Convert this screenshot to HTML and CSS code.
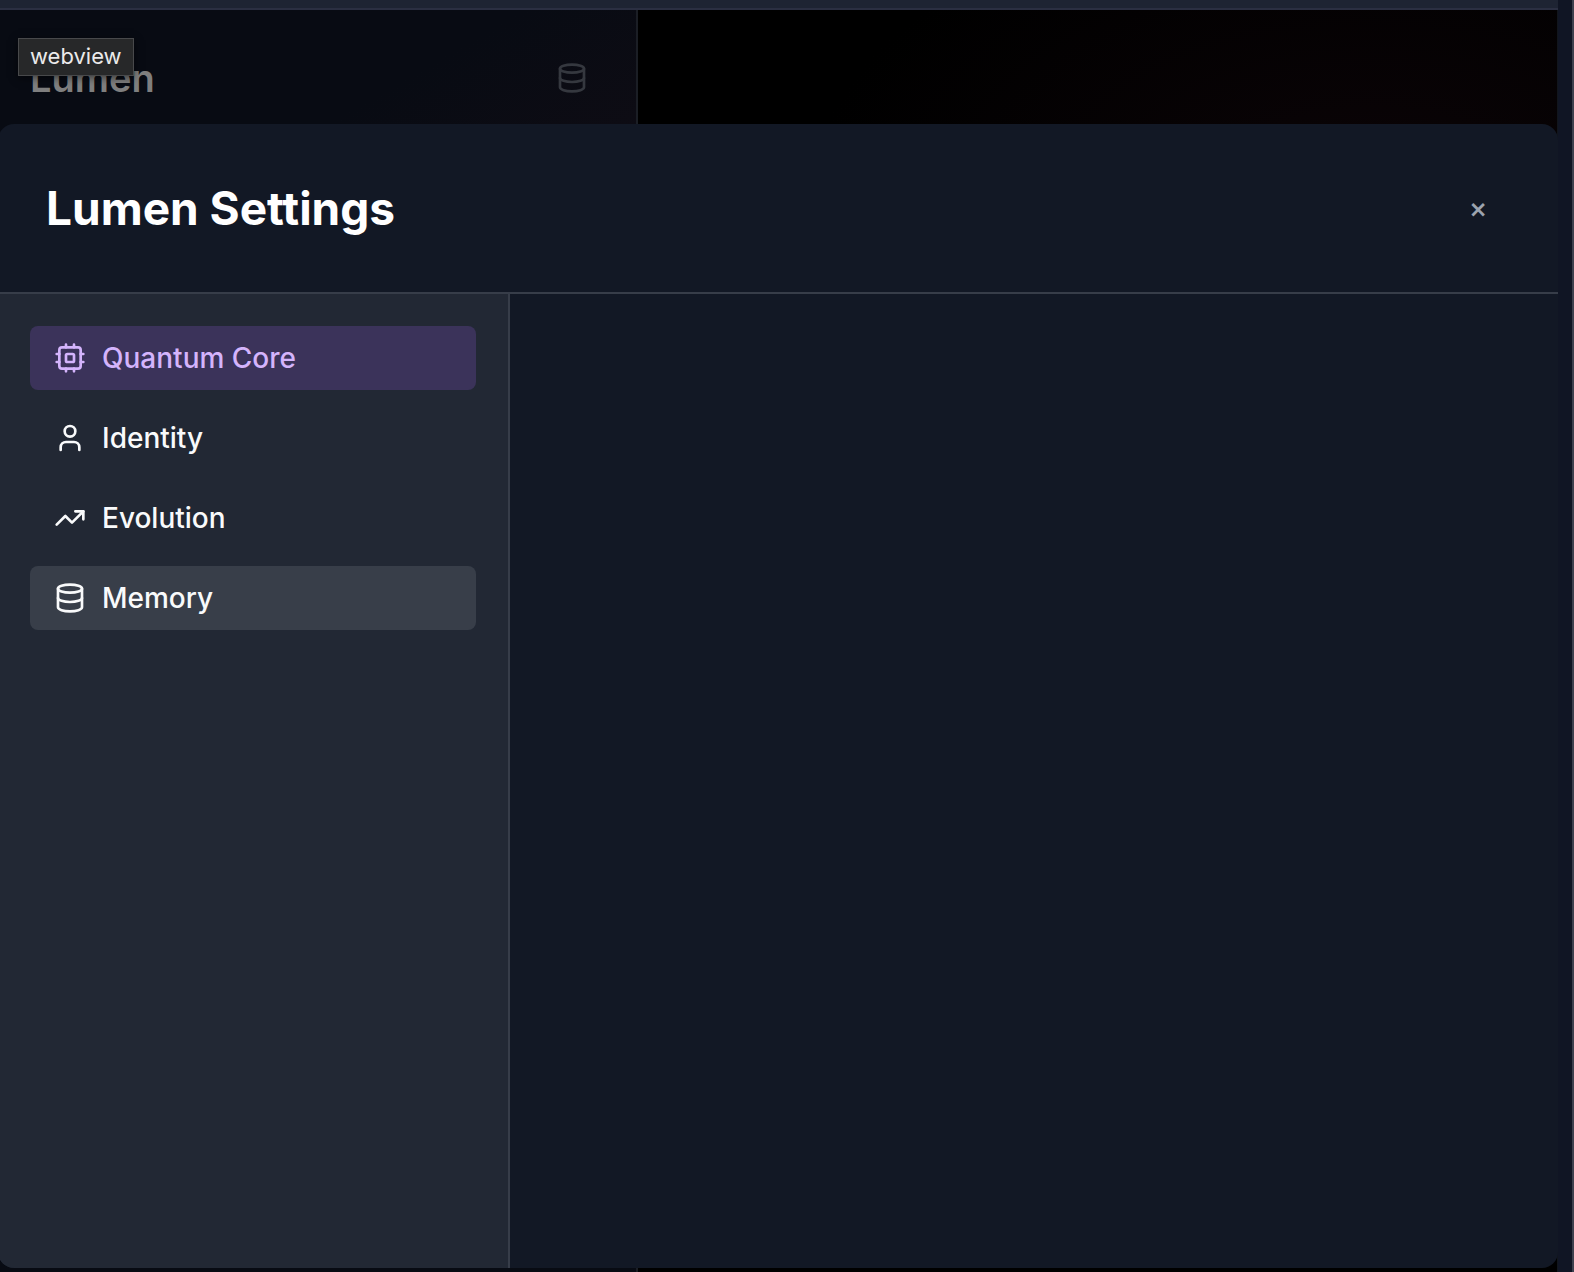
FILE: index.html
```html
<!DOCTYPE html>
<html lang="en">
<head>
<meta charset="utf-8">
<title>Lumen Settings</title>
<link rel="stylesheet" href="styles.css">
</head>
<body>
<div class="window">
  <div class="view">
    <div class="topbar"></div>
    <div class="stage">
      <aside class="panel">
        <header class="panel-header">
          <h1 class="brand">Lumen</h1>
          <button class="panel-button" type="button" aria-label="Memory">
            <svg class="icon" viewBox="0 0 24 24"><ellipse cx="12" cy="5" rx="9" ry="3"/><path d="M3 5V19A9 3 0 0 0 21 19V5"/><path d="M3 12A9 3 0 0 0 21 12"/></svg>
          </button>
        </header>
      </aside>
      <main class="canvas"></main>
      <div class="overlay">
        <section class="dialog" role="dialog" aria-labelledby="dialog-title">
          <header class="dialog-header">
            <h2 class="dialog-title" id="dialog-title">Lumen Settings</h2>
            <button class="close" type="button">×</button>
          </header>
          <div class="dialog-body">
            <nav class="tabs">
              <button class="tab tab-active" type="button">
                <svg class="icon" viewBox="0 0 24 24"><rect x="4" y="4" width="16" height="16" rx="2"/><rect x="9" y="9" width="6" height="6" rx="1"/><path d="M15 2v2M15 20v2M2 15h2M2 9h2M20 15h2M20 9h2M9 2v2M9 20v2"/></svg>
                Quantum Core
              </button>
              <button class="tab" type="button">
                <svg class="icon" viewBox="0 0 24 24"><path d="M19 21v-2a4 4 0 0 0-4-4H9a4 4 0 0 0-4 4v2"/><circle cx="12" cy="7" r="4"/></svg>
                Identity
              </button>
              <button class="tab" type="button">
                <svg class="icon" viewBox="0 0 24 24"><path d="M22 7L13.5 15.5L8.5 10.5L2 17"/><path d="M16 7H22V13"/></svg>
                Evolution
              </button>
              <button class="tab tab-hover" type="button">
                <svg class="icon" viewBox="0 0 24 24"><ellipse cx="12" cy="5" rx="9" ry="3"/><path d="M3 5V19A9 3 0 0 0 21 19V5"/><path d="M3 12A9 3 0 0 0 21 12"/></svg>
                Memory
              </button>
            </nav>
            <div class="tab-content"></div>
          </div>
        </section>
      </div>
      <div class="tooltip" role="tooltip">webview</div>
    </div>
  </div>
  <div class="gutter"></div>
</div>
</body>
</html>
```
FILE: styles.css
```css
* {
  box-sizing: border-box;
}

body {
  margin: 0;
  font-family: Inter, "Liberation Sans", sans-serif;
  background: #101524;
}

button {
  border: 0;
  margin: 0;
  background: none;
  font: inherit;
}

.window {
  display: flex;
  min-height: 100vh;
}

.view {
  flex: 1;
  display: flex;
  flex-direction: column;
  overflow: hidden;
}

.gutter {
  width: 16px;
  background: #101524;
  border-right: 2px solid #3e414e;
}

.topbar {
  height: 10px;
  background: #1e2433;
  border-bottom: 2px solid #2b2f42;
}

.stage {
  flex: 1;
  display: flex;
  position: relative;
  border-right: 1px solid #11151c;
}

.panel {
  width: 638px;
  background: #080b13;
  border-right: 2px solid #1b1e25;
}

.panel-header {
  display: flex;
  align-items: center;
  justify-content: space-between;
  padding: 36px 32px 36px 30px;
  background: linear-gradient(150deg, #080b13 60%, #0e0c14);
}

.brand {
  margin: 0;
  font-size: 38px;
  line-height: 64px;
  font-weight: 600;
  color: #7f7f7f;
}

.panel-button {
  display: flex;
  padding: 16px;
  color: #35383f;
}

.icon {
  flex: none;
  width: 32px;
  height: 32px;
  fill: none;
  stroke: currentColor;
  stroke-width: 2;
  stroke-linecap: round;
  stroke-linejoin: round;
}

.canvas {
  flex: 1;
  background: radial-gradient(ellipse 560px 300px at 80% 180px, #0b0407, #000);
}

.overlay {
  position: absolute;
  inset: 0 -1px 0 -2px;
  display: flex;
  padding: 114px 0 4px;
}

.dialog {
  flex: 1;
  display: flex;
  flex-direction: column;
  overflow: hidden;
  border-radius: 16px;
  background: #121825;
}

.dialog-header {
  display: flex;
  align-items: center;
  justify-content: space-between;
  padding: 48px;
  border-bottom: 2px solid #373d49;
}

.dialog-title {
  margin: 0;
  font-size: 46px;
  line-height: 72px;
  font-weight: 700;
  color: #fff;
}

.close {
  width: 64px;
  padding: 0;
  font-size: 28px;
  line-height: 64px;
  font-weight: 500;
  color: #9ca3af;
}

.dialog-body {
  flex: 1;
  display: flex;
}

.tabs {
  display: flex;
  flex-direction: column;
  gap: 16px;
  width: 512px;
  padding: 32px;
  background: #222834;
  border-right: 2px solid #373d49;
}

.tab {
  display: flex;
  align-items: center;
  gap: 16px;
  padding: 0 24px;
  border-radius: 8px;
  font-size: 28px;
  line-height: 64px;
  font-weight: 500;
  color: #f9fafb;
}

.tab-active {
  background: #3b335a;
  color: #d4b4fc;
}

.tab-hover {
  background: #383e49;
}

.tab-content {
  flex: 1;
}

.tooltip {
  position: absolute;
  left: 18px;
  top: 28px;
  padding: 0 11px 2px;
  border: 1px solid #48494b;
  background: #272829;
  box-shadow: 0 2px 8px #0008;
  font-size: 22px;
  line-height: 34px;
  color: #ebebeb;
}
```
